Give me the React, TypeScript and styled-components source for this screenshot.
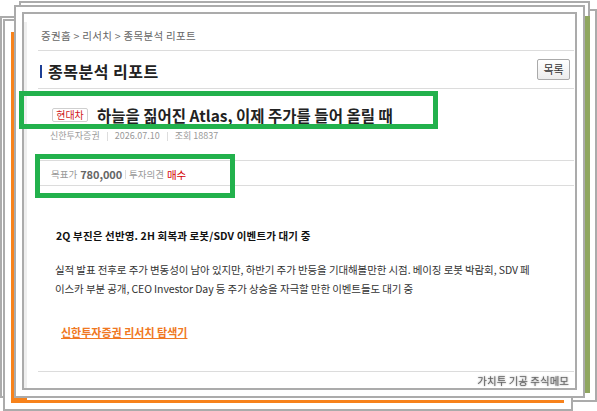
import React from 'react';
import styled, { createGlobalStyle } from 'styled-components';

const Global = createGlobalStyle`
  html, body { margin: 0; padding: 0; background: #fff; }
  body { font-family: "Noto Sans CJK KR", "Noto Sans", sans-serif; }
  * { box-sizing: border-box; }
`;

const Desk = styled.div`
  position: relative;
  width: 597px;
  height: 411px;
  overflow: hidden;
  background: #fff;
`;

type Rect = { $x: number; $y: number; $w: number; $h: number };

const Frame = styled.div<Rect>`
  position: absolute;
  left: ${p => p.$x}px;
  top: ${p => p.$y}px;
  width: ${p => p.$w}px;
  height: ${p => p.$h}px;
  border: 2px solid #ababab;
  background: #fff;
`;

const Strip = styled.div<Rect & { $c: string }>`
  position: absolute;
  left: ${p => p.$x}px;
  top: ${p => p.$y}px;
  width: ${p => p.$w}px;
  height: ${p => p.$h}px;
  background: ${p => p.$c};
`;

const Highlight = styled.div<Rect>`
  position: absolute;
  left: ${p => p.$x}px;
  top: ${p => p.$y}px;
  width: ${p => p.$w}px;
  height: ${p => p.$h}px;
  border: 5px solid #22b14c;
  z-index: 5;
`;

const Panel = styled.div`
  position: absolute;
  left: 22px;
  top: 12px;
  width: 555px;
  height: 378px;
  border: 2px solid #ababab;
  background: #fff;
  padding-top: 8px;
  display: flex;
  flex-direction: column;
`;

const Inner = styled.div`
  flex: 1;
  border-left: 3px solid #efefef;
  padding: 0 1px 0 11px;
  display: flex;
  flex-direction: column;
`;

const Breadcrumb = styled.div`
  height: 28px;
  display: flex;
  align-items: center;
  padding-left: 3px;
  font-size: 10.5px;
  letter-spacing: 0.3px;
  line-height: 14px;
  color: #666;
  white-space: pre;
`;

const Rule = styled.div`
  height: 1px;
  background: #dcdcdc;
  flex: none;
`;

const TitleRow = styled.div`
  height: 37px;
  display: flex;
  align-items: center;
  justify-content: space-between;
  padding: 0 4px 0 2px;
`;

const Title = styled.h2`
  margin: 0;
  display: flex;
  align-items: center;
  gap: 6px;
  font-size: 16px;
  letter-spacing: 0.5px;
  font-weight: 700;
  color: #222;
  line-height: 18px;
  padding-top: 3px;
  &::before {
    content: '';
    width: 2px;
    height: 13px;
    background: #1d3f95;
  }
`;

const ListButton = styled.button`
  width: 33px;
  height: 21px;
  padding: 0;
  border: 1px solid #aaa;
  border-radius: 2px;
  background: linear-gradient(#ffffff, #ececec);
  font-family: inherit;
  font-size: 11px;
  color: #333;
  line-height: 19px;
`;

const HeadSection = styled.div`
  height: 71px;
  padding: 18px 0 0 14px;
  display: flex;
  flex-direction: column;
`;

const HeadLine = styled.div`
  display: flex;
  align-items: center;
  gap: 9px;
  height: 16px;
`;

const Tag = styled.span`
  display: inline-flex;
  align-items: center;
  justify-content: center;
  width: 36px;
  height: 14px;
  border: 1px solid #cfcfcf;
  border-radius: 2px;
  font-size: 10px;
  color: #d01818;
  line-height: 12px;
`;

const Headline = styled.h1`
  margin: 0;
  font-size: 15.5px;
  font-weight: 700;
  color: #222;
  line-height: 16px;
  white-space: nowrap;
`;

const Meta = styled.div`
  margin: 6px 0 0 -2px;
  display: flex;
  align-items: center;
  gap: 7px;
  font-size: 9px;
  line-height: 14px;
  color: #999;
`;

const Bar = styled.span`
  width: 1px;
  height: 9px;
  background: #ddd;
`;

const TargetRow = styled.div`
  height: 24px;
  padding: 2px 0 0 13px;
  display: flex;
  align-items: center;
  gap: 3px;
  font-size: 9.5px;
  color: #999;
`;

const Value = styled.span<{ $red?: boolean }>`
  font-size: ${p => (p.$red ? '10.5px' : '11px')};
  font-weight: ${p => (p.$red ? 400 : 700)};
  color: ${p => (p.$red ? '#d40000' : '#666')};
  letter-spacing: -0.1px;
`;

const Body = styled.div`
  flex: 1;
  display: flex;
  flex-direction: column;
  padding-left: 17px;
`;

const Summary = styled.h3`
  margin: 42px 0 0 1px;
  font-size: 10.5px;
  font-weight: 700;
  line-height: 16px;
  color: #111;
  letter-spacing: 0.15px;
`;

const Paragraph = styled.p`
  margin: 16px 0 0;
  width: 482px;
  font-size: 10.5px;
  line-height: 19px;
  color: #333;
  letter-spacing: -0.1px;
`;

const Explore = styled.a`
  margin: 26px 0 0 6px;
  align-self: flex-start;
  font-size: 11px;
  font-weight: 700;
  line-height: 16px;
  color: #f07822;
  text-decoration: underline;
`;

const Footer = styled.div`
  height: 15px;
  margin-top: 1px;
  padding-right: 5px;
  display: flex;
  justify-content: flex-end;
  align-items: center;
  font-size: 10.5px;
  color: #666;
  text-shadow: 0 0 2px #888;
  filter: blur(0.4px);
`;

export default function App() {
  return (
    <>
      <Global />
      <Desk>
        <Frame $x={0} $y={16} $w={200} $h={382} />
        <Frame $x={300} $y={9} $w={297} $h={393} />
        <Frame $x={19} $y={1} $w={571} $h={300} />
        <Frame $x={3} $y={19} $w={570} $h={392} />
        <Strip $x={11} $y={32} $w={3} $h={371} $c="#f7821b" />
        <Strip $x={11} $y={400} $w={553} $h={3} $c="#f7821b" />
        <Strip $x={11} $y={397} $w={16} $h={6} $c="#f7821b" />
        <Frame $x={14} $y={5} $w={571} $h={393} />
        <Strip $x={585} $y={16} $w={5} $h={377} $c="#8fa65f" />
        <Panel>
          <Inner>
            <Breadcrumb>증권홈 &gt; 리서치 &gt; 종목분석 리포트</Breadcrumb>
            <Rule />
            <TitleRow>
              <Title>종목분석 리포트</Title>
              <ListButton>목록</ListButton>
            </TitleRow>
            <Rule />
            <HeadSection>
              <HeadLine>
                <Tag>현대차</Tag>
                <Headline>하늘을 짊어진 Atlas, 이제 주가를 들어 올릴 때</Headline>
              </HeadLine>
              <Meta>
                <span>신한투자증권</span>
                <Bar />
                <span>2026.07.10</span>
                <Bar />
                <span>조회 18837</span>
              </Meta>
            </HeadSection>
            <Rule />
            <TargetRow>
              <span>목표가</span>
              <Value>780,000</Value>
              <Bar />
              <span>투자의견</span>
              <Value $red>매수</Value>
            </TargetRow>
            <Rule />
            <Body>
              <Summary>2Q 부진은 선반영. 2H 회복과 로봇/SDV 이벤트가 대기 중</Summary>
              <Paragraph>
                실적 발표 전후로 주가 변동성이 남아 있지만, 하반기 주가 반등을 기대해볼만한 시점. 베이징 로봇 박람회, SDV 페이스카 부분 공개, CEO Investor Day 등 주가 상승을 자극할 만한 이벤트들도 대기 중
              </Paragraph>
              <Explore href="#">신한투자증권 리서치 탐색기</Explore>
            </Body>
            <Rule />
            <Footer>가치투 기공 주식메모</Footer>
          </Inner>
        </Panel>
        <Highlight $x={19} $y={91} $w={419} $h={38} />
        <Highlight $x={35} $y={154} $w={200} $h={44} />
      </Desk>
    </>
  );
}
